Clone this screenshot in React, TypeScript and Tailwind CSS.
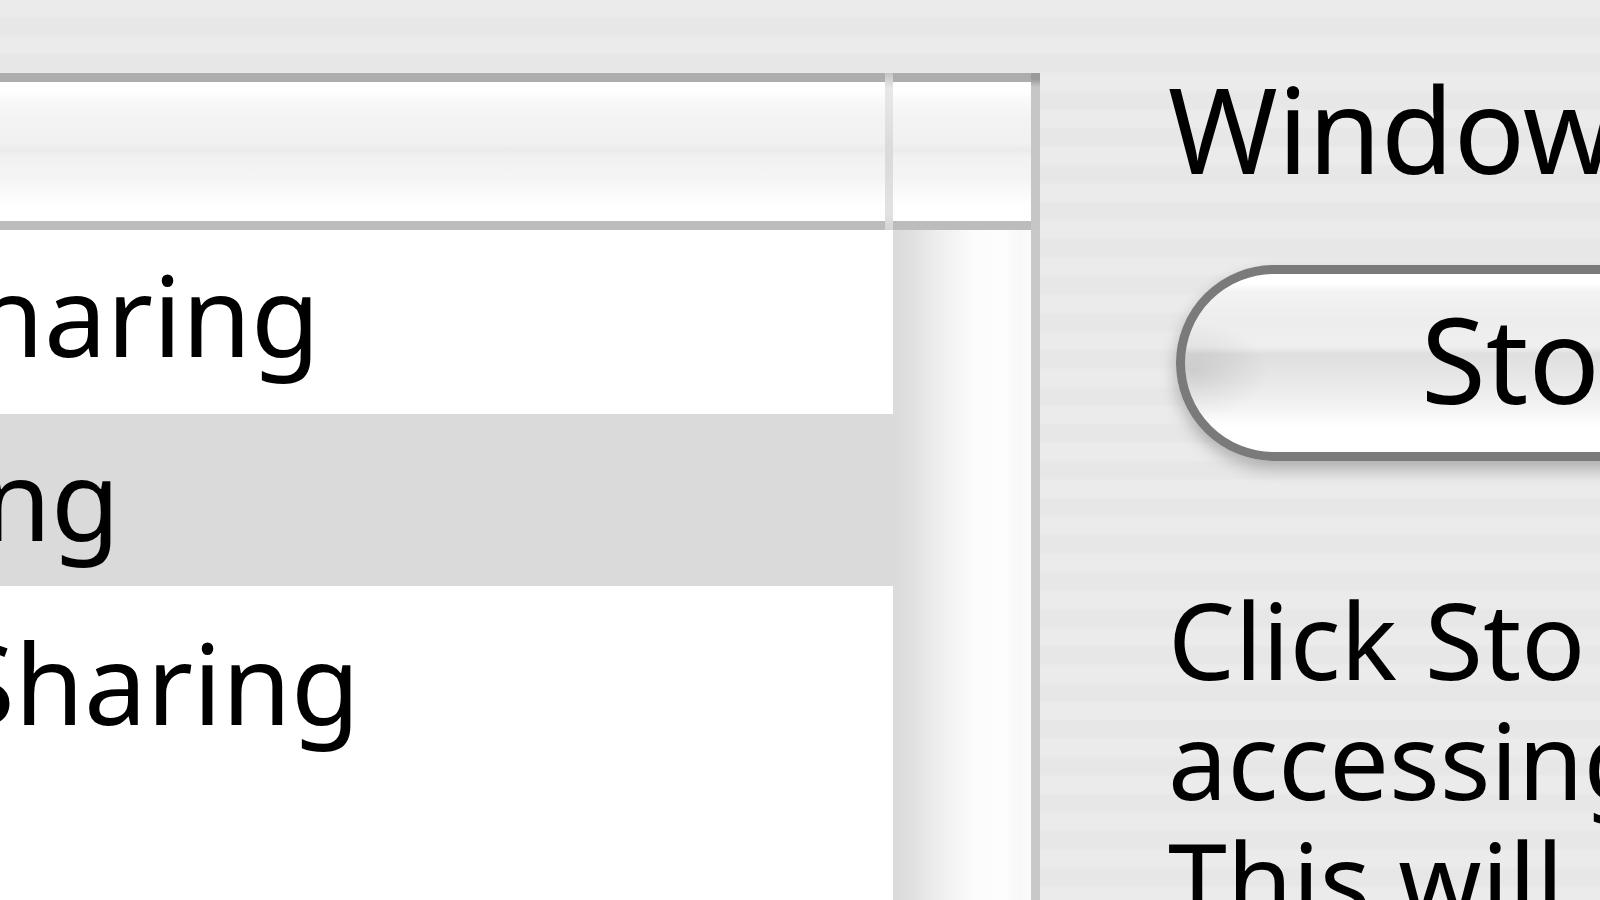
const services = [
  { name: "haring", selected: false, width: "w-[320px]" },
  { name: "ng", selected: true, width: "w-[120px]" },
  { name: "Sharing", selected: false, width: "w-[360px]" },
];

const headerCell =
  "h-[157px] border-t-[9px] border-b-[9px] border-t-[#adadad] border-b-[#bcbcbc] bg-[linear-gradient(to_bottom,#ffffff_6%,#f8f8f8_14%,#f3f3f3_28%,#f1f1f1_44%,#ebebeb_49%,#f1f1f1_54%,#f5f5f5_70%,#fefefe_88%,#ffffff)]";

function ServiceList() {
  return (
    <section className="flex w-[65%] shrink-0 flex-col">
      <div className="flex">
        <div className={`flex-1 ${headerCell}`} />
        <div className="w-2 bg-[linear-gradient(to_bottom,#c4c4c4,#e8e8e8_10%,#dadada_50%,#e2e2e2_90%,#d4d4d4)]" />
        <div className={`w-[138px] ${headerCell}`} />
        <div className="w-[9px] bg-[linear-gradient(to_bottom,#9a9a9a_6px,#c6c6c6_14px)]" />
      </div>

      <div className="flex flex-1 border-r-[9px] border-[#c8c8c8]">
        <ul className="flex flex-1 flex-col gap-3 bg-white">
          {services.map((s) => (
            <li key={s.name} className={s.selected ? "h-[172px] bg-[#dadada]" : "h-[172px]"}>
              <button
                type="button"
                className={`flex justify-end text-[112px] leading-[168px] whitespace-nowrap ${s.width}`}
              >
                {s.name}
              </button>
            </li>
          ))}
        </ul>
        {/* empty scroll track */}
        <div className="w-[138px] bg-[linear-gradient(to_right,#dadada,#dfdfdf_12%,#ececec_30%,#f5f5f5_45%,#fcfcfc_60%,#fdfdfd_80%,#f8f8f8_92%,#fbfbfb)]" />
      </div>
    </section>
  );
}

function ServiceDetails() {
  return (
    <section className="min-w-0 flex-1 overflow-hidden pl-32 whitespace-nowrap">
      <h1 className="-mt-4 text-[118px] leading-[144px]">Window</h1>
      <button
        type="button"
        className="mt-16 ml-2 block h-[196px] w-[740px] rounded-full border-[9px] border-[#7a7a7a] bg-[radial-gradient(ellipse_76px_48px_at_8px_96px,rgba(0,0,0,0.1),transparent),linear-gradient(to_bottom,#ffffff_5%,#f3f3f3_10%,#ededed_25%,#efefef_41%,#dfdfdf_45%,#e8e8e8_60%,#f4f4f4_76%,#ffffff_86%)] pb-2 pl-[236px] text-left text-[118px] leading-[160px] shadow-[0_8px_16px_rgba(0,0,0,0.25)]"
      >
        Sto
      </button>
      <p className="mt-[118px] text-[106px] leading-[120px]">
        Click Sto
        <br />
        accessing
        <br />
        This will
      </p>
    </section>
  );
}

export default function App() {
  return (
    <main className="flex h-screen overflow-hidden bg-[repeating-linear-gradient(to_bottom,#ebebeb_0px,#ebebeb_15px,#e7e7e7_19px,#e7e7e7_34px,#ebebeb_37px)] pt-[73px] font-['Noto_Sans',sans-serif] text-black">
      <ServiceList />
      <ServiceDetails />
    </main>
  );
}
